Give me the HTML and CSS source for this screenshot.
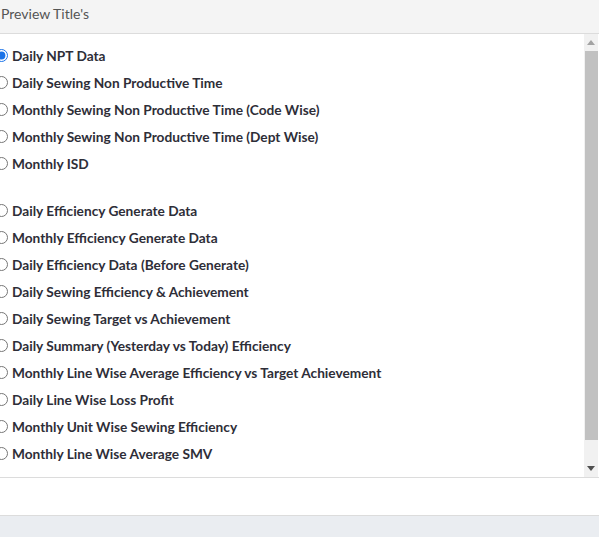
FILE: index.html
```html
<!DOCTYPE html>
<html>
<head>
<meta charset="utf-8">
<link rel="stylesheet" href="styles.css">
</head>
<body>
<div class="panel">
  <div class="panel-head">Preview Title's</div>
  <div class="panel-body">
    <div class="list">
      <div class="group">
        <label class="row"><input type="radio" name="r" checked><span>Daily NPT Data</span></label>
        <label class="row"><input type="radio" name="r"><span>Daily Sewing Non Productive Time</span></label>
        <label class="row"><input type="radio" name="r"><span>Monthly Sewing Non Productive Time (Code Wise)</span></label>
        <label class="row"><input type="radio" name="r"><span>Monthly Sewing Non Productive Time (Dept Wise)</span></label>
        <label class="row"><input type="radio" name="r"><span>Monthly ISD</span></label>
      </div>
      <div class="group">
        <label class="row"><input type="radio" name="r"><span>Daily Efficiency Generate Data</span></label>
        <label class="row"><input type="radio" name="r"><span>Monthly Efficiency Generate Data</span></label>
        <label class="row"><input type="radio" name="r"><span>Daily Efficiency Data (Before Generate)</span></label>
        <label class="row"><input type="radio" name="r"><span>Daily Sewing Efficiency &amp; Achievement</span></label>
        <label class="row"><input type="radio" name="r"><span>Daily Sewing Target vs Achievement</span></label>
        <label class="row"><input type="radio" name="r"><span>Daily Summary (Yesterday vs Today) Efficiency</span></label>
        <label class="row"><input type="radio" name="r"><span>Monthly Line Wise Average Efficiency vs Target Achievement</span></label>
        <label class="row"><input type="radio" name="r"><span>Daily Line Wise Loss Profit</span></label>
        <label class="row"><input type="radio" name="r"><span>Monthly Unit Wise Sewing Efficiency</span></label>
        <label class="row"><input type="radio" name="r"><span>Monthly Line Wise Average SMV</span></label>
      </div>
    </div>
    <div class="scrollbar">
      <div class="sb-btn"><svg width="8" height="5" viewBox="0 0 8 5"><path d="M0 5 L4 0 L8 5 Z" fill="#a3a3a3"/></svg></div>
      <div class="sb-track"><div class="sb-thumb"></div></div>
      <div class="sb-btn"><svg width="8" height="5" viewBox="0 0 8 5"><path d="M0 0 L8 0 L4 5 Z" fill="#505050"/></svg></div>
    </div>
  </div>
  <div class="panel-foot"></div>
</div>
<div class="page-bottom"></div>
</body>
</html>
```

FILE: styles.css
```css
html, body {
  margin: 0;
  padding: 0;
  background: #ffffff;
}
body {
  font-family: "Lato", "Open Sans", sans-serif;
  width: 599px;
  height: 537px;
  overflow: hidden;
}
.panel {
  width: 599px;
}
.panel-head {
  height: 28px;
  padding: 5px 0 0 1px;
  line-height: 18px;
  font-size: 14px;
  color: #555555;
  background: #f4f4f4;
  border-bottom: 1px solid #dcdcdc;
}
.panel-body {
  display: flex;
  height: 443px;
  border-bottom: 1px solid #dcdcdc;
}
.list {
  flex: 1;
  overflow: hidden;
  padding-top: 8px;
  display: flex;
  flex-direction: column;
  gap: 20px;
}
.row {
  display: flex;
  align-items: center;
  height: 27px;
  font-size: 13.7px;
  font-weight: 700;
  color: #2e2e38;
}
.row input {
  margin: 0 4px 0 -5px;
  width: 13px;
  height: 13px;
  accent-color: #1a73e8;
}
.scrollbar {
  width: 14px;
  margin-right: 1px;
  background: #f1f1f1;
  display: flex;
  flex-direction: column;
}
.sb-btn {
  height: 17px;
  display: flex;
  align-items: center;
  justify-content: center;
}
.sb-track {
  flex: 1;
  display: flex;
  flex-direction: column;
}
.sb-thumb {
  height: 389px;
  margin: 0 0 0 1px;
  background: #c1c1c1;
}
.panel-foot {
  height: 37px;
  border-bottom: 1px solid #dcdcdc;
}
.page-bottom {
  height: 21px;
  background: #eaedf1;
}
```
